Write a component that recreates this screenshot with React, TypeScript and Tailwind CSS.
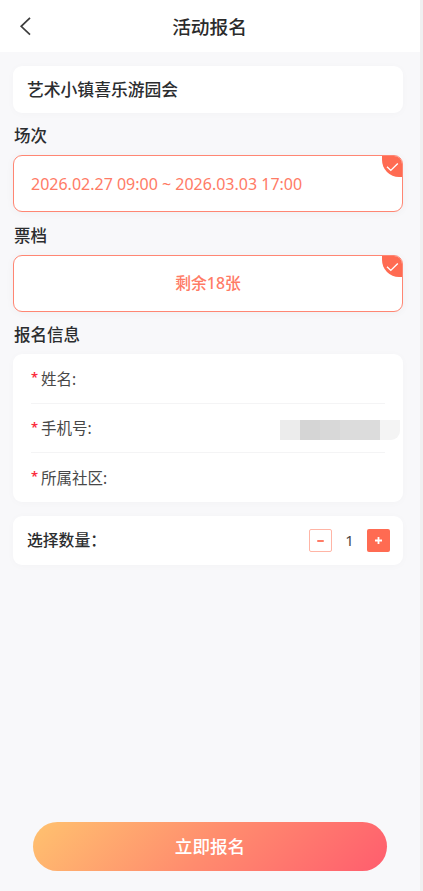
import type { ReactNode } from 'react';

interface SelectableCardProps {
  children: ReactNode;
  className?: string;
}

const fields = [
  { id: 'name', label: '姓名:', masked: false },
  { id: 'phone', label: '手机号:', masked: true },
  { id: 'community', label: '所属社区:', masked: false },
];

function Header() {
  return (
    <header className="relative flex h-[52px] items-center justify-center bg-white pt-[3px] pr-px">
      <button className="absolute left-[19px] top-[16px]" aria-label="返回">
        <svg width="13" height="20" viewBox="0 0 13 20" fill="none" stroke="#3c3c3c" strokeWidth="1.7">
          <path d="M11 1.8 2.2 10.3 11 18.6" />
        </svg>
      </button>
      <h1 className="text-[18.7px] leading-none font-medium text-[#2b2b2b]">活动报名</h1>
    </header>
  );
}

function SectionTitle({ children }: { children: ReactNode }) {
  return (
    <h2 className="flex h-[43px] items-center pt-[5px] pl-px text-[16.5px] leading-none font-medium text-[#2b2d2f]">
      {children}
    </h2>
  );
}

function SelectableCard({ children, className = '' }: SelectableCardProps) {
  return (
    <div
      className={`relative flex h-[57px] items-center overflow-hidden rounded-[9px] border-[1.4px] border-[#ff8673] bg-white text-[#ff7b66] shadow-[0_1px_8px_rgba(0,0,0,0.04)] ${className}`}
    >
      {children}
      <span className="absolute -top-px -right-px flex h-[22px] w-[21px] items-center justify-center rounded-bl-[17px] bg-[#ff6b52] pt-px">
        <svg width="13" height="10" viewBox="0 0 13 10" fill="none" stroke="#fff" strokeWidth="1.4">
          <path d="M1 4.8 4.8 8.4 11.8 1.6" />
        </svg>
      </span>
    </div>
  );
}

function MaskedValue() {
  return (
    <div className="mt-[3px] -mr-[15px] flex h-5 overflow-hidden rounded-br-[9px]">
      <span className="w-5 bg-[#ececec]" />
      <span className="w-5 bg-[#d5d5d5]" />
      <span className="w-5 bg-[#d8d8d8]" />
      <span className="w-10 bg-[#dcdcdc]" />
      <span className="w-5 bg-[#f4f4f4]" />
    </div>
  );
}

function Stepper() {
  return (
    <div className="flex items-center">
      <button
        className="flex size-[23px] items-center justify-center rounded-[2px] border border-[#ffb5a6]"
        aria-label="减少"
      >
        <span className="h-[2px] w-[7px] rounded-full bg-[#ff7b66]" />
      </button>
      <span className="w-[35px] pb-px text-center text-[15px] leading-none text-[#484848]">1</span>
      <button
        className="flex size-[23px] items-center justify-center rounded-[2px] bg-[#ff6b52]"
        aria-label="增加"
      >
        <svg width="7" height="7" viewBox="0 0 7 7" stroke="#fff" strokeWidth="1.8">
          <path d="M3.5 0v7M0 3.5h7" />
        </svg>
      </button>
    </div>
  );
}

export default function App() {
  return (
    <div className="h-[891px] w-[423px] bg-[#f0f0f1] pr-[3px] font-['Noto_Sans','Noto_Sans_CJK_SC',sans-serif]">
      <div className="flex h-full flex-col bg-[#f8f8fa]">
        <Header />
        <main className="flex flex-1 flex-col pt-[14px] pr-[17px] pl-[13px]">
          <div className="flex h-[47px] items-center rounded-[9px] bg-white pt-px pl-[14px] text-[16.8px] leading-none font-medium text-[#2b2d2f] shadow-[0_1px_8px_rgba(0,0,0,0.025)]">
            艺术小镇喜乐游园会
          </div>

          <div className="-mt-px">
            <SectionTitle>场次</SectionTitle>
            <SelectableCard className="pl-[17px] text-[16px] leading-none">
              2026.02.27 09:00 ~ 2026.03.03 17:00
            </SelectableCard>
          </div>

          <SectionTitle>票档</SectionTitle>
          <SelectableCard className="justify-center text-[15.8px] leading-none font-medium">
            剩余18张
          </SelectableCard>

          <div className="-mt-px">
            <SectionTitle>报名信息</SectionTitle>
          </div>
          <div className="flex h-[148px] flex-col rounded-[9px] bg-white px-[18px] shadow-[0_1px_8px_rgba(0,0,0,0.025)]">
            {fields.map((field) => (
              <div
                key={field.id}
                className="flex flex-1 items-center justify-between border-b border-[#f4f4f5] last:border-b-0"
              >
                <label className="flex items-center pt-[2px] text-[15.5px] leading-none text-[#484848]">
                  <span className="-mt-1 w-[10px] text-[13px] font-semibold text-[#fa2a3c]">*</span>
                  {field.label}
                </label>
                {field.masked && <MaskedValue />}
              </div>
            ))}
          </div>

          <div className="mt-[14px] flex h-[49px] items-center justify-between rounded-[9px] bg-white pr-[13px] pl-[14px] shadow-[0_1px_8px_rgba(0,0,0,0.025)]">
            <span className="text-[15.8px] leading-none font-medium text-[#2b2d2f]">选择数量：</span>
            <Stepper />
          </div>
        </main>

        <footer className="pr-[33px] pb-5 pl-[33px]">
          <button className="flex h-[49px] w-full items-center justify-center rounded-full bg-[linear-gradient(135deg,#ffc26f_0%,#ff8c6e_50%,#ff5d6e_100%)] text-[17.6px] leading-none font-medium text-white">
            立即报名
          </button>
        </footer>
      </div>
    </div>
  );
}
